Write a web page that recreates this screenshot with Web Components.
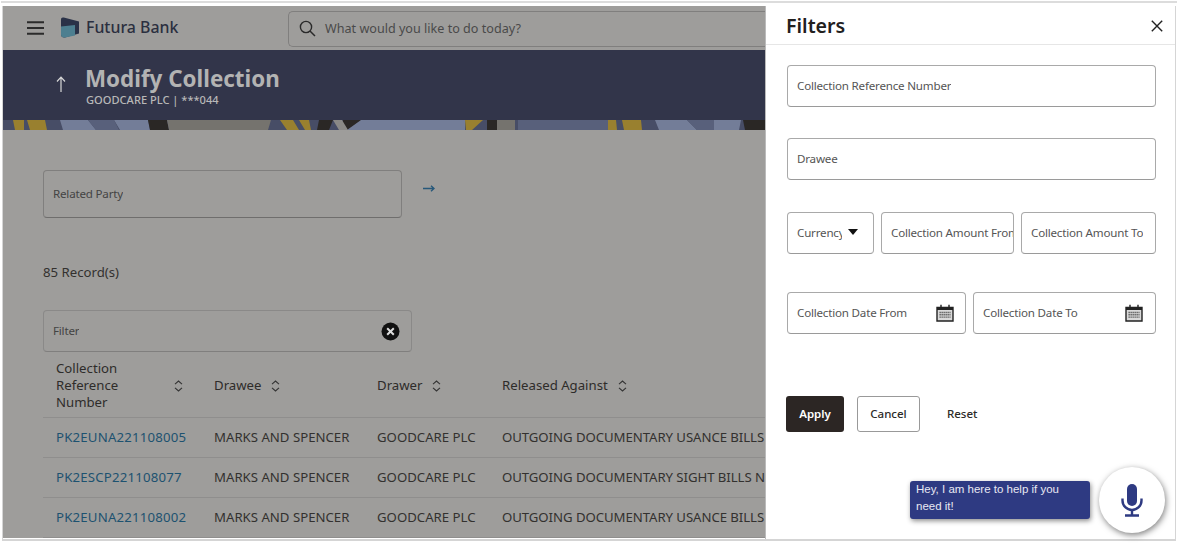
<!DOCTYPE html>
<html><head><meta charset="utf-8"><style>
html,body{margin:0;padding:0;background:#fff;height:543px;overflow:hidden}
body{font-family:"Noto Sans","Open Sans",sans-serif;color:#2c2a28}
</style></head><body>
<bank-app></bank-app>
<script>
function el(name,html,css){customElements.define(name,class extends HTMLElement{constructor(){super();this.attachShadow({mode:'open'}).innerHTML='<style>'+css+'</style>'+html;}});}
const FF='"Noto Sans","Open Sans",sans-serif';
el('bank-field','<span><slot></slot></span><slot name="icon"></slot>',`
:host{display:flex;align-items:center;justify-content:space-between;box-sizing:border-box;height:var(--h,42px);padding:0 var(--pr,10px) 0 9px;border:1px solid var(--b,#a9a9a9);border-bottom-color:var(--bb,#9a9a9a);border-radius:4px;font:11.6px/16px ${FF};letter-spacing:-.2px;color:var(--c,#555);overflow:hidden;white-space:nowrap;flex:none;min-width:0}
span{overflow:hidden;white-space:nowrap;min-width:0}`);
el('calendar-icon','<svg width="18" height="18" viewBox="0 0 18 18"><path d="M1 3.5h16v13.5H1z" fill="#d9d9d9" stroke="#222" stroke-width="1.4"/><path d="M1 3.5h16v2.6H1z" fill="#222"/><path d="M5 .8v4M13 .8v4" stroke="#222" stroke-width="1.4"/><path d="M3.5 8.5h11M3.5 10.8h11M3.5 13.1h11" stroke="#555" stroke-width="1.4" stroke-dasharray="1.3 .7"/></svg>',`:host{display:flex;flex:none;width:18px;height:18px}`);
el('bank-header',`<button aria-label="menu"><svg width="18" height="14" viewBox="0 0 18 14"><path d="M0 1.2h17M0 7h17M0 12.8h17" stroke="#2b2b2b" stroke-width="1.9"/></svg></button>
<svg class="logo" width="20" height="21" viewBox="0 0 20 21"><path d="M1 2.5C1 .8 2.2 0 3.8.6L19 4.4v12L5 20.4C2.6 20.8 1 19.6 1 17.8z" fill="#2a3248"/><path d="M1 9.5 15 8v10.6L5 20.4C2.6 20.8 1 19.6 1 17.8z" fill="#4d7f90"/></svg>
<b>Futura Bank</b>
<div class="search"><svg width="17" height="17" viewBox="0 0 17 17"><circle cx="7" cy="7" r="5.6" fill="none" stroke="#2a2a2a" stroke-width="1.4"/><path d="M11 11l5 5" stroke="#2a2a2a" stroke-width="1.5"/></svg><span>What would you like to do today?</span></div>`,`
:host{display:flex;align-items:center;box-sizing:border-box;height:44px;flex:none;background:#9e9d9b;padding-left:24px}
button{all:unset;display:flex;width:18px;height:14px;margin-right:15px}
.logo{margin-right:6px;margin-top:-1px}
b{font:500 15.9px/20px ${FF};color:#2b2f3f;width:202px;margin-top:-2px}
.search{box-sizing:border-box;display:flex;align-items:center;gap:9px;height:36px;flex:1;margin-top:1px;padding-left:10px;border:1px solid #807f7e;border-right:0;border-radius:5px 0 0 5px;font:12.6px/18px ${FF};color:#4a4a4a;white-space:nowrap}`);
el('bank-title',`<div class="band"><svg class="arrow" width="12" height="16" viewBox="0 0 12 16"><path d="M6 16V1.5M2 5.5 6 1.2l4 4.3" fill="none" stroke="#d8d8d8" stroke-width="1.2"/></svg><div class="t"><h1>Modify Collection</h1><p>GOODCARE PLC | ***044</p></div></div>
<svg class="strip" width="763" height="10" viewBox="0 0 763 10" preserveAspectRatio="none">
<rect width="763" height="10" fill="#474d66"/>
<g fill="#99802f"><path d="M10 0h11v10H12zM24 0h18l2 10H27zM277 0h13l6 10h-12zM296 0h10l2 10h-6zM462 0h18l-11 10h-6zM605 0h8l1 10h-9zM619 0h19l1 10h-18z"/></g>
<g fill="#737d98"><path d="M57 0h28l8 10H60zM111 0h34l2 10h-30zM357 0h105v10H343zM652 0h32l10 10h-38zM711 0h27l-2 10h-25z"/></g>
<g fill="#58607b"><path d="M85 0h26l5 10H93zM684 0h27l0 10h-17zM515 0h90v10h-90z"/></g>
<g fill="#2a2725"><path d="M145 0h19l2 10h-19zM316 0h14l-4 10h-12zM340 0h18l-14 10h-8zM484 0h10v10h-10zM740 0h23v10h-21z"/></g>
<path d="M164 0h104l-3 10H166zM494 0h18v10h-18z" fill="#75736e"/><path d="M330 0h9l6 10h-9z" fill="#8a8986"/></svg>`,`
:host{display:block;flex:none}
.band{display:flex;align-items:flex-start;height:70px;background:#32354a;padding:0 0 0 52px;box-sizing:border-box}
.arrow{margin-top:26px;margin-right:19px}
h1{margin:13px 0 0 -1px;font:700 22.4px/31px ${FF};color:#b3b3b3;white-space:nowrap}
p{margin:0;font:500 11.1px/12px ${FF};color:#b8b8b8;white-space:nowrap}
.strip{display:block}`);
el('sort-icon','<svg width="9" height="12" viewBox="0 0 9 12"><path d="M1 4.2 4.5 1 8 4.2M1 7.8 4.5 11 8 7.8" fill="none" stroke="#333" stroke-width="1.1"/></svg>',`:host{display:inline-flex;flex:none;width:9px;height:12px}`);
el('table-row','<slot></slot>',`
:host{display:grid;grid-template-columns:158px 163px 125px 1fr;align-items:center;height:40px;box-sizing:border-box;padding-left:13px;border-bottom:1px solid #8f8e8d;font:13.2px/17px ${FF};color:#33312f;white-space:nowrap;overflow:hidden}
:host([head]){height:58px;padding-bottom:8px;color:#2e2c2a}`);
el('head-cell','<slot></slot><slot name="s"></slot>',`:host{display:flex;align-items:center;gap:var(--g,10px);width:var(--w,auto)}`);
el('bank-main',`<bank-header></bank-header><bank-title></bank-title><div class="content"><slot></slot></div>`,`
:host{display:flex;flex-direction:column;flex:none;width:763px;height:532px;background:#9e9d9b;overflow:hidden}
.content{display:flex;flex-direction:column;padding:40px 0 0 40px;flex:1;min-height:0}`);
el('bank-panel',`<header><h2>Filters</h2><svg width="12" height="12" viewBox="0 0 12 12"><path d="M.8.8l10.4 10.4M11.2.8.8 11.2" stroke="#222" stroke-width="1.4"/></svg></header><div class="body"><slot></slot></div>`,`
:host{display:flex;flex-direction:column;flex:1;min-width:0;background:#fff;box-shadow:-1px 0 0 #bbb}
header{display:flex;align-items:center;justify-content:space-between;box-sizing:border-box;height:39px;padding:1px 12px 0 20px;border-bottom:1px solid #e6e6e6}
h2{margin:0;font:600 19.6px/26px ${FF};color:#22201e}
.body{display:flex;flex-direction:column;padding:20px 0 0 21px}`);
el('bank-button','<slot></slot>',`
:host{display:inline-flex;align-items:center;justify-content:center;box-sizing:border-box;height:36px;border-radius:3px;font:500 11.5px/16px ${FF};color:#2c2a28}
:host([kind=primary]){width:58px;background:#2c2624;color:#fff;font-weight:600}
:host([kind=secondary]){width:63px;margin-left:13px;background:#fff;border:1px solid #999}
:host([kind=link]){width:auto;margin-left:27px}`);
el('voice-help',`<div class="bubble">Hey, I am here to help if you need it!</div><div class="mic"><svg width="22" height="33" viewBox="0 0 22 33"><rect x="6" y="0" width="10" height="22" rx="5" fill="#2e3a82"/><path d="M1.5 14.5v2a9.5 9.5 0 0 0 19 0v-2" fill="none" stroke="#2e3a82" stroke-width="2.4"/><path d="M11 26v5M4 31.5h14" stroke="#2e3a82" stroke-width="2.4"/></svg></div>`,`
:host{position:absolute;right:10px;bottom:6px;display:flex;align-items:center;gap:9px}
.bubble{box-sizing:border-box;width:180px;height:38px;padding:0 6px;background:#2e3a82;border-radius:3px;color:#e8e8f2;font:11.5px/17px "Liberation Sans",Arial,sans-serif;box-shadow:1px 2px 5px rgba(0,0,0,.45)}
.mic{width:66px;height:66px;border-radius:50%;background:#fff;display:flex;align-items:center;justify-content:center;box-shadow:1px 2px 6px rgba(0,0,0,.5)}`);
el('bank-app',`<div class="rule"></div><div class="frame">
<bank-main>
 <div class="party"><bank-field style="--h:48px;--b:#807f7e;--bb:#6f6e6d;--c:#444;width:359px">Related Party</bank-field>
 <svg class="go" width="12" height="7" viewBox="0 0 12 7"><path d="M0 3.5h10.5M8 .8l3 2.7-3 2.7" fill="none" stroke="#27587a" stroke-width="1.4"/></svg></div>
 <div class="rec">85 Record(s)</div>
 <bank-field style="--h:42px;--b:#8a8988;--bb:#807f7e;--c:#444;width:369px">Filter<svg slot="icon" width="19" height="19" viewBox="0 0 19 19" style="margin-right:1px"><circle cx="9.5" cy="9.5" r="9" fill="#111"/><path d="M6.2 6.2l6.6 6.6M12.8 6.2l-6.6 6.6" stroke="#ddd" stroke-width="2"/></svg></bank-field>
 <div class="table">
  <table-row head>
   <head-cell style="--w:127px;--g:0;justify-content:space-between"><span>Collection<br>Reference<br>Number</span><sort-icon slot="s"></sort-icon></head-cell>
   <head-cell>Drawee<sort-icon slot="s"></sort-icon></head-cell>
   <head-cell>Drawer<sort-icon slot="s"></sort-icon></head-cell>
   <head-cell>Released Against<sort-icon slot="s"></sort-icon></head-cell>
  </table-row>
  <table-row><span class="l">PK2EUNA221108005</span><span>MARKS AND SPENCER</span><span>GOODCARE PLC</span><span class="a">OUTGOING DOCUMENTARY USANCE BILLS</span></table-row>
  <table-row><span class="l">PK2ESCP221108077</span><span>MARKS AND SPENCER</span><span>GOODCARE PLC</span><span class="a">OUTGOING DOCUMENTARY SIGHT BILLS NOT</span></table-row>
  <table-row><span class="l">PK2EUNA221108002</span><span>MARKS AND SPENCER</span><span>GOODCARE PLC</span><span class="a">OUTGOING DOCUMENTARY USANCE BILLS</span></table-row>
 </div>
</bank-main>
<bank-panel>
 <bank-field class="w369">Collection Reference Number</bank-field>
 <bank-field class="w369 f2">Drawee</bank-field>
 <div class="r r3">
  <bank-field style="width:87px;--pr:15px">Currency<svg slot="icon" width="10" height="6" viewBox="0 0 10 6" style="display:block;flex:none;margin:-2px 0 0 6px"><path d="M0 0h10L5 6z" fill="#111"/></svg></bank-field>
  <bank-field style="width:133px;--pr:0px">Collection Amount From</bank-field>
  <bank-field style="width:135px">Collection Amount To</bank-field>
 </div>
 <div class="r r4">
  <bank-field style="width:179px;--pr:11px">Collection Date From<calendar-icon slot="icon"></calendar-icon></bank-field>
  <bank-field style="width:183px;--pr:12px">Collection Date To<calendar-icon slot="icon"></calendar-icon></bank-field>
 </div>
 <div class="btns"><bank-button kind="primary">Apply</bank-button><bank-button kind="secondary">Cancel</bank-button><bank-button kind="link">Reset</bank-button></div>
 <voice-help></voice-help>
</bank-panel>
</div>`,`
:host{display:block;height:543px;box-sizing:border-box;padding-top:1px}
.rule{height:2px;background:#dcdcdc;margin:0 1px}
.frame{display:flex;align-items:stretch;box-sizing:border-box;height:535px;margin:3px 2px 0 2px;border:1px solid #d5d5d5;border-top:0;border-bottom-width:2px;position:relative}
bank-main{align-self:flex-start}
.party{display:flex;gap:21px;align-items:flex-start}
.go{margin-top:15px}
.rec{margin-top:45px;font:13.2px/18px ${FF};color:#33312f}
.table{margin-top:8px}
.rec+bank-field{margin-top:29px}
.l{color:#1d5270;letter-spacing:.2px}
.a{letter-spacing:-.06px}
.w369{width:369px}
.f2{margin-top:31px}
.r{display:flex;gap:7px}
.r3{margin-top:32px}
.r4{margin-top:38px}
.btns{display:flex;align-items:center;margin:62px 0 0 -1px}
`);
</script>
</body></html>
